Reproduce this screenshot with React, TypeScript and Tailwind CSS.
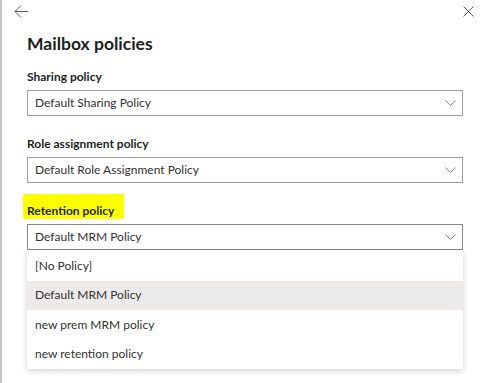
import { ReactNode } from "react";

const font = { fontFamily: 'Lato, "Open Sans", Arial, sans-serif' };

function Chevron() {
  return (
    <svg width="11" height="6" viewBox="0 0 11 6" className="shrink-0">
      <path d="M0.5 0.5 L5.5 5.5 L10.5 0.5" fill="none" stroke="#8a8886" strokeWidth="1" />
    </svg>
  );
}

function Field({ label, value, highlight, children }: { label: string; value: string; highlight?: boolean; children?: ReactNode }) {
  return (
    <div className="flex flex-col">
      <div className="relative flex h-[26px] items-center">
        {/* 黄色のマーカー */}
        {highlight && <span className="absolute -left-[4px] -top-[4px] h-[25px] w-[101px] bg-[#ffff00]" />}
        <span className="relative text-[12px] font-bold text-[#201f1e]">{label}</span>
      </div>
      <div
        className={
          "flex h-[26px] items-center justify-between border bg-white pl-[7px] pr-[6px] " +
          (highlight ? "border-[#8a8886]" : "border-[#a19f9d]")
        }
      >
        <span className="text-[12px] text-[#323130]">{value}</span>
        <Chevron />
      </div>
      {children}
    </div>
  );
}

export default function App() {
  const options = ["[No Policy]", "Default MRM Policy", "new prem MRM policy", "new retention policy"];

  return (
    <div className="h-[383px] w-[487px] overflow-hidden border-l-2 border-[#c8c6c4] bg-white" style={font}>
      {/* 上部のボタン */}
      <div className="flex h-[22px] items-center justify-between pl-[12px] pr-[13px]">
        <svg width="15" height="13" viewBox="0 0 15 13">
          <path d="M14 6.5 H1 M7 0.5 L1 6.5 L7 12.5" fill="none" stroke="#605e5c" strokeWidth="1" />
        </svg>
        <svg width="11" height="11" viewBox="0 0 11 11">
          <path d="M0.5 0.5 L10.5 10.5 M10.5 0.5 L0.5 10.5" fill="none" stroke="#605e5c" strokeWidth="1" />
        </svg>
      </div>

      <div className="flex flex-col pl-[25px] pr-[24px]">
        <h1 className="mt-[10px] text-[17.5px] font-bold leading-[24px] text-[#201f1e]">Mailbox policies</h1>

        <div className="mt-[8px] flex flex-col gap-[15px]">
          <Field label="Sharing policy" value="Default Sharing Policy" />
          <Field label="Role assignment policy" value="Default Role Assignment Policy" />
          <Field label="Retention policy" value="Default MRM Policy" highlight>
            <div className="mt-[1px] flex flex-col bg-white shadow-[0_2px_6px_rgba(0,0,0,0.18)]">
              {options.map((o, i) => (
                <div
                  key={o}
                  className={
                    "flex h-[29.5px] items-center pl-[8px] text-[12px] text-[#323130] " + (i === 1 ? "bg-[#edebe9]" : "")
                  }
                >
                  {o}
                </div>
              ))}
            </div>
          </Field>
        </div>
      </div>
    </div>
  );
}
